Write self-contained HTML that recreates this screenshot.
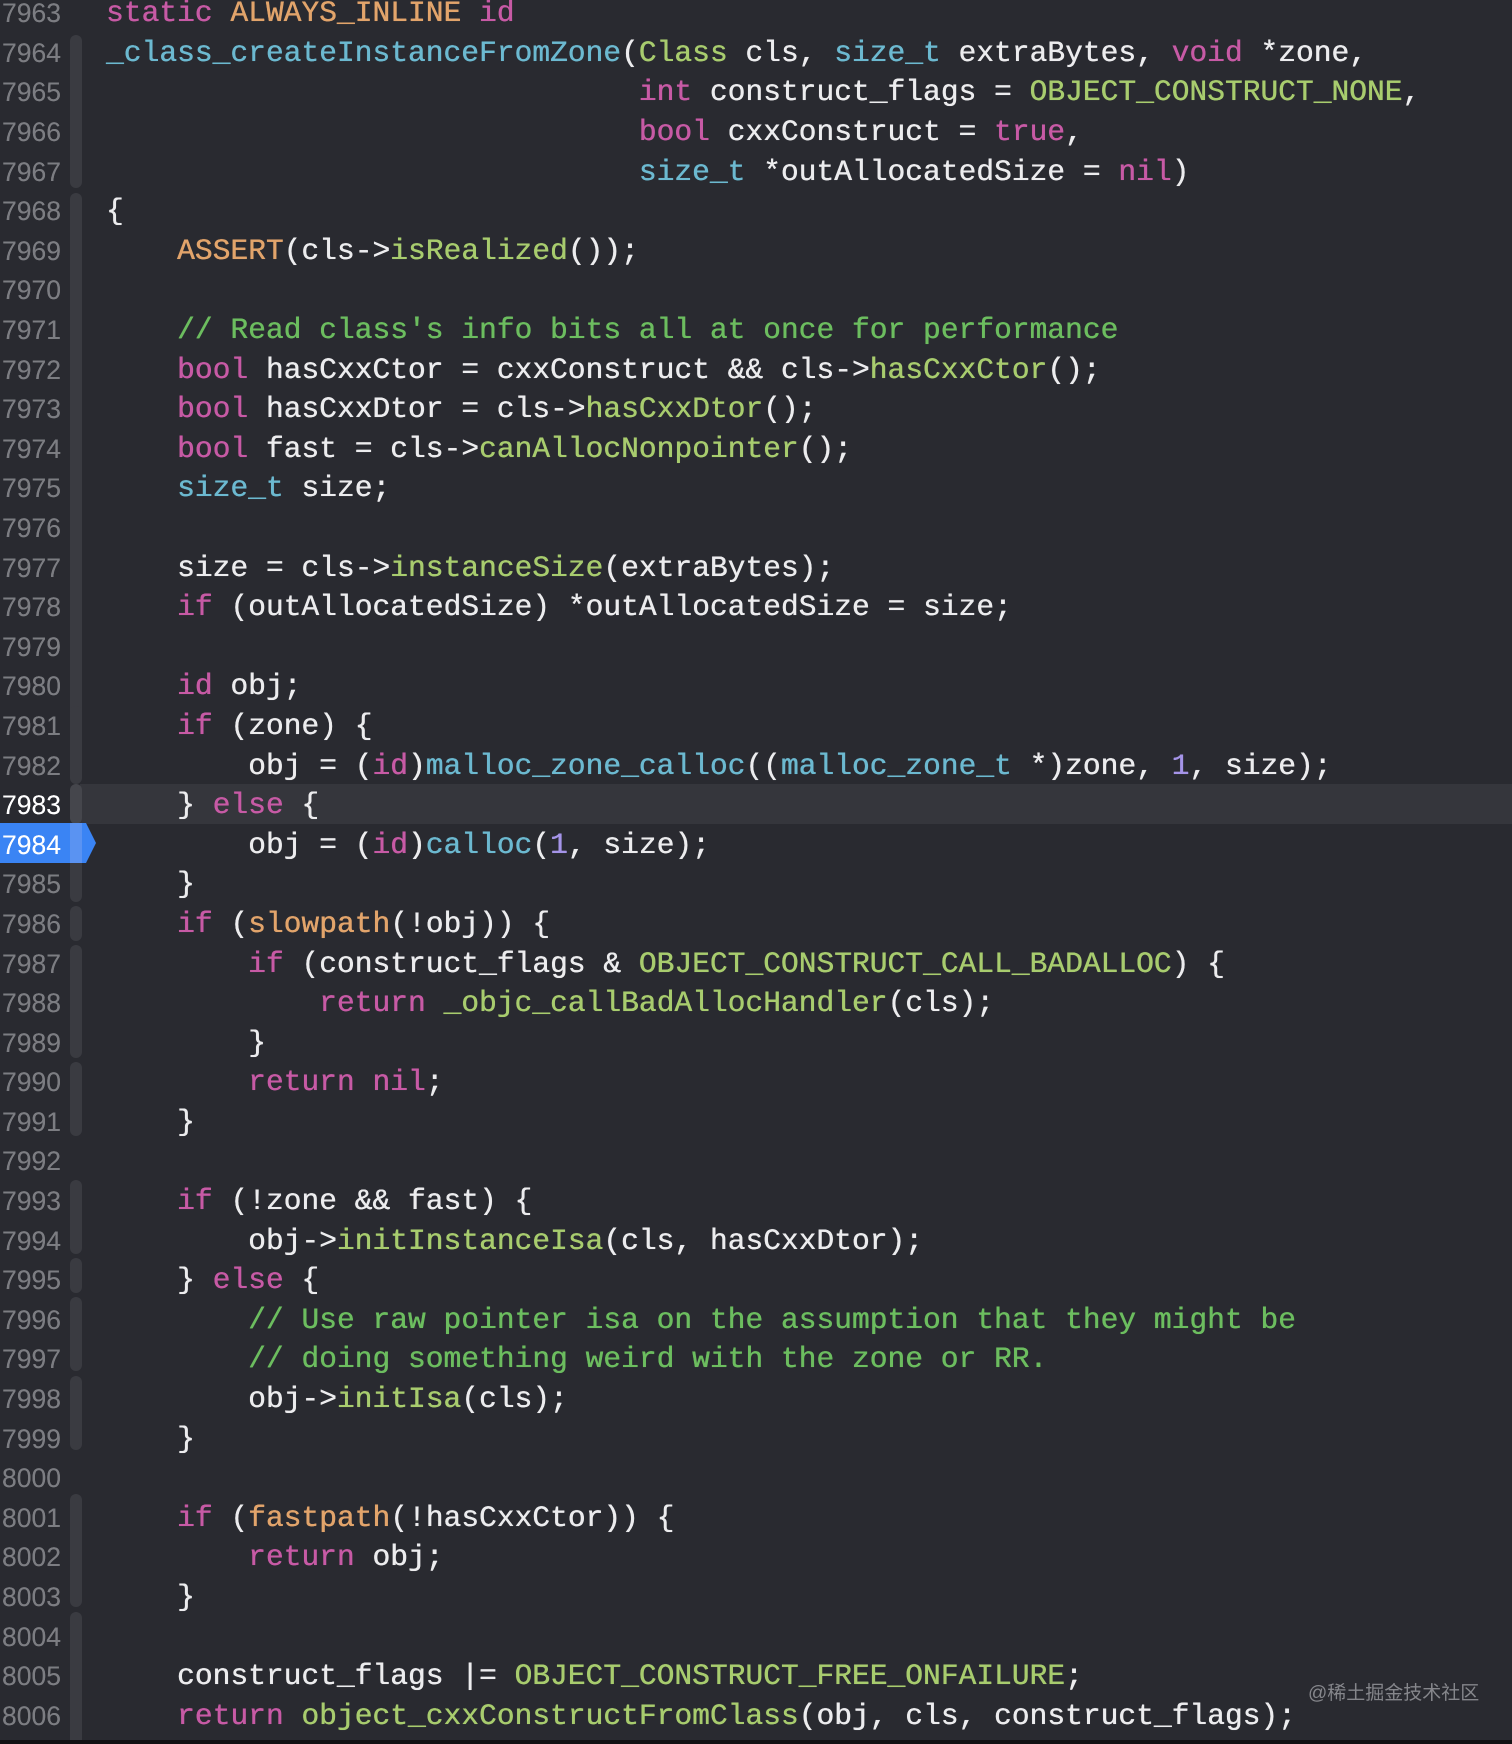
<!DOCTYPE html>
<html><head><meta charset="utf-8"><style>
html,body{margin:0;padding:0;}
body{width:1512px;height:1744px;background:#292a30;position:relative;overflow:hidden;}
.hl{position:absolute;left:80px;right:0;top:784px;height:39.6px;background:#35363c;}
.bar{position:absolute;left:70px;width:12px;background:#3a3b41;border-radius:6px;}
.bp{position:absolute;left:0;top:823px;width:96px;height:40px;background:#3a84f4;clip-path:polygon(0 0,86px 0,96px 50%,86px 100%,0 100%);}
.nums{position:absolute;left:0;top:-5.75px;width:61px;text-align:right;font-family:"Liberation Sans",sans-serif;font-size:26.5px;line-height:39.6px;color:#7c7d82;text-shadow:0 0 0.3px currentColor;}
.nums div{height:39.6px;}
.code{position:absolute;left:106px;top:-5.75px;margin:0;font-family:"Liberation Mono",monospace;font-size:29.6px;line-height:39.6px;color:#ececee;white-space:pre;text-shadow:0 0 0.5px currentColor,0.3px 0 0 currentColor;}
.k{color:#c75aa5}.p{color:#e2a46b}.t{color:#6cb9d0}.f{color:#a8cc6e}.c{color:#6cbd5f}.n{color:#a594e8}
.wm{position:absolute;left:1308px;top:1678px;font-family:"Liberation Sans","Noto Sans CJK SC",sans-serif;font-size:19px;color:#85868b;}
.bot{position:absolute;left:0;top:1740px;width:1512px;height:4px;background:#111113;}
</style></head><body>
<div class="hl"></div>
<div class="bar" style="top:35px;height:153px"></div>
<div class="bar" style="top:193px;height:545px"></div>
<div class="bar" style="top:706px;height:78px"></div>
<div class="bar" style="top:784px;height:40px;background:#45464c"></div>
<div class="bar" style="top:824px;height:78px"></div>
<div class="bar" style="top:906px;height:35px"></div>
<div class="bar" style="top:945px;height:113px"></div>
<div class="bar" style="top:1062px;height:74px"></div>
<div class="bar" style="top:1180px;height:74px"></div>
<div class="bar" style="top:1258px;height:35px"></div>
<div class="bar" style="top:1297px;height:74px"></div>
<div class="bar" style="top:1376px;height:74px"></div>
<div class="bar" style="top:1494px;height:113px"></div>
<div class="bar" style="top:1612px;height:132px;border-radius:6px 6px 0 0"></div>
<div class="bp"></div>
<div style="position:absolute;left:70px;top:823px;width:12px;height:40px;background:#5a93f2"></div>
<div class="nums">
<div>7963</div><div>7964</div><div>7965</div><div>7966</div><div>7967</div><div>7968</div><div>7969</div><div>7970</div><div>7971</div><div>7972</div><div>7973</div><div>7974</div><div>7975</div><div>7976</div><div>7977</div><div>7978</div><div>7979</div><div>7980</div><div>7981</div><div>7982</div><div style="color:#fff">7983</div><div style="color:#fff">7984</div><div>7985</div><div>7986</div><div>7987</div><div>7988</div><div>7989</div><div>7990</div><div>7991</div><div>7992</div><div>7993</div><div>7994</div><div>7995</div><div>7996</div><div>7997</div><div>7998</div><div>7999</div><div>8000</div><div>8001</div><div>8002</div><div>8003</div><div>8004</div><div>8005</div><div>8006</div>
</div>
<pre class="code"><span class="k">static</span> <span class="p">ALWAYS_INLINE</span> <span class="k">id</span>
<span class="t">_class_createInstanceFromZone</span>(<span class="f">Class</span> cls, <span class="t">size_t</span> extraBytes, <span class="k">void</span> *zone,
                              <span class="k">int</span> construct_flags = <span class="f">OBJECT_CONSTRUCT_NONE</span>,
                              <span class="k">bool</span> cxxConstruct = <span class="k">true</span>,
                              <span class="t">size_t</span> *outAllocatedSize = <span class="k">nil</span>)
{
    <span class="p">ASSERT</span>(cls-&gt;<span class="f">isRealized</span>());

    <span class="c">// Read class's info bits all at once for performance</span>
    <span class="k">bool</span> hasCxxCtor = cxxConstruct &amp;&amp; cls-&gt;<span class="f">hasCxxCtor</span>();
    <span class="k">bool</span> hasCxxDtor = cls-&gt;<span class="f">hasCxxDtor</span>();
    <span class="k">bool</span> fast = cls-&gt;<span class="f">canAllocNonpointer</span>();
    <span class="t">size_t</span> size;

    size = cls-&gt;<span class="f">instanceSize</span>(extraBytes);
    <span class="k">if</span> (outAllocatedSize) *outAllocatedSize = size;

    <span class="k">id</span> obj;
    <span class="k">if</span> (zone) {
        obj = (<span class="k">id</span>)<span class="t">malloc_zone_calloc</span>((<span class="t">malloc_zone_t</span> *)zone, <span class="n">1</span>, size);
    } <span class="k">else</span> {
        obj = (<span class="k">id</span>)<span class="t">calloc</span>(<span class="n">1</span>, size);
    }
    <span class="k">if</span> (<span class="p">slowpath</span>(!obj)) {
        <span class="k">if</span> (construct_flags &amp; <span class="f">OBJECT_CONSTRUCT_CALL_BADALLOC</span>) {
            <span class="k">return</span> <span class="f">_objc_callBadAllocHandler</span>(cls);
        }
        <span class="k">return</span> <span class="k">nil</span>;
    }

    <span class="k">if</span> (!zone &amp;&amp; fast) {
        obj-&gt;<span class="f">initInstanceIsa</span>(cls, hasCxxDtor);
    } <span class="k">else</span> {
        <span class="c">// Use raw pointer isa on the assumption that they might be</span>
        <span class="c">// doing something weird with the zone or RR.</span>
        obj-&gt;<span class="f">initIsa</span>(cls);
    }

    <span class="k">if</span> (<span class="p">fastpath</span>(!hasCxxCtor)) {
        <span class="k">return</span> obj;
    }

    construct_flags |= <span class="f">OBJECT_CONSTRUCT_FREE_ONFAILURE</span>;
    <span class="k">return</span> <span class="f">object_cxxConstructFromClass</span>(obj, cls, construct_flags);
</pre>
<div class="wm">@稀土掘金技术社区</div>
<div class="bot"></div>
</body></html>
